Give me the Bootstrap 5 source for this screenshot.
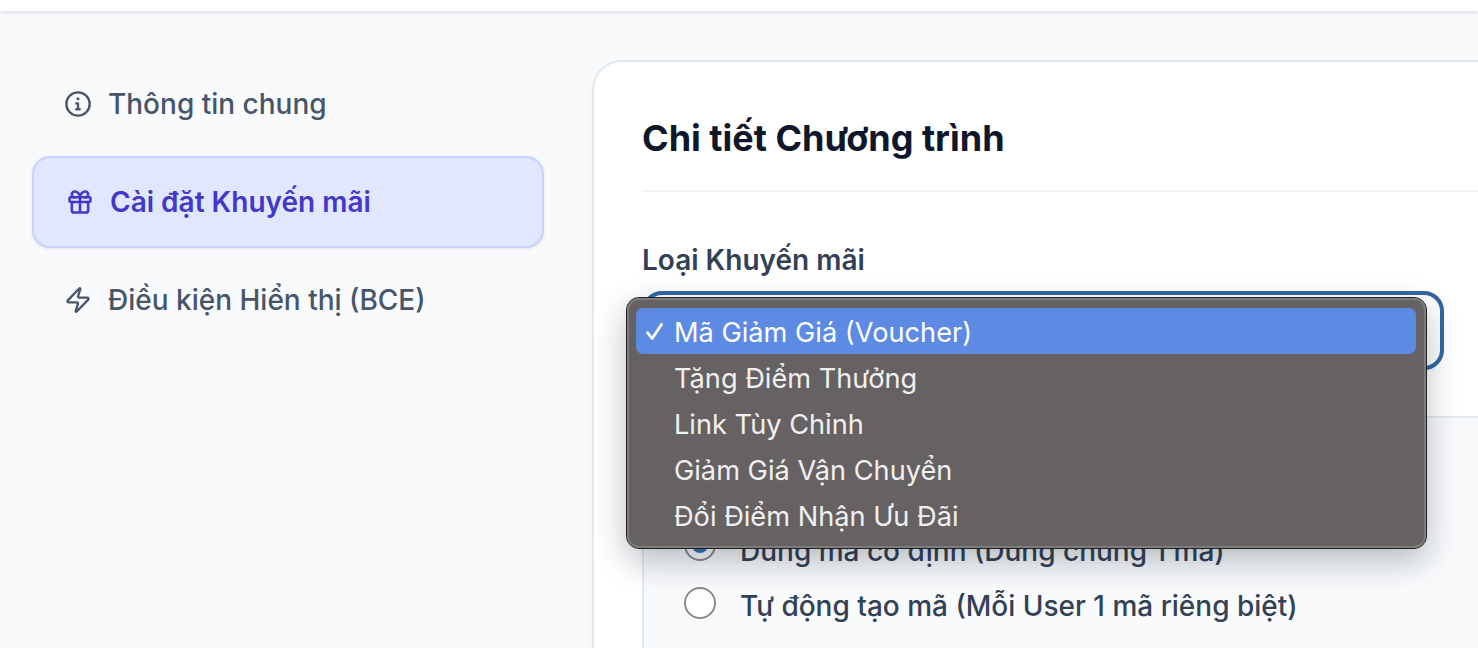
<!DOCTYPE html>
<html lang="vi">
<head>
<meta charset="utf-8">
<title>Chi tiết Chương trình</title>
<link href="https://cdn.jsdelivr.net/npm/bootstrap@5.3.0/dist/css/bootstrap.min.css" rel="stylesheet">
<style>
html,body{height:648px;overflow:hidden;}
body{background:#f8fafc;font-family:Inter,"Liberation Sans",sans-serif;color:#334155;}
.topbar{height:11px;background:#fff;box-shadow:0 1px 4px rgba(100,116,139,.28);position:relative;}
.pagewrap{width:1800px;padding:49px 0 0 32px;gap:48px;}
.sidenav{width:512px;flex:none;margin-top:-2px;}
.sidelink{height:92px;padding:0 30px;font-size:28px;font-weight:500;color:#475569;border:2px solid transparent;border-radius:18px;gap:16px;margin-bottom:6px;}
.sidelink svg{flex:none;width:28px;height:28px;fill:none;stroke:currentColor;stroke-width:2;stroke-linecap:round;stroke-linejoin:round;}
.sidelink.on{background:#e0e7ff;border-color:#c7d2fe;color:#4338ca;font-weight:600;box-shadow:0 1px 3px rgba(15,23,42,.1);gap:16px;padding:0 32px;}
.sidelink.on svg{stroke-width:2.2;}
.maincard{width:1100px;flex:none;height:800px;background:#fff;border:2px solid #e2e8f0;border-radius:30px 0 0 0;padding:48px;box-shadow:0 1px 3px rgba(15,23,42,.05);}
.cardhead{font-size:36px;font-weight:700;color:#0f172a;line-height:56px;padding-bottom:24px;border-bottom:2px solid #f1f5f9;margin-bottom:48px;}
.fieldlabel{font-size:28px;font-weight:600;color:#334155;line-height:40px;margin-bottom:11px;}
.selectwrap{position:relative;width:802px;}
.fakeselect{height:79px;border:4px solid #3068a5;border-radius:20px;background:#fff;}
.osmenu{position:absolute;left:-16px;top:6px;width:801px;height:252px;z-index:5;padding:10px 10px 9px 9px;background:#666263;border:1px solid #222;outline:2px solid #7f7c7c;outline-offset:-3px;border-radius:13px;box-shadow:0 12px 32px rgba(15,23,42,.28);font-size:27.2px;color:#f1f0f0;}
.osrow{height:46px;padding:4px 0 0 38px;position:relative;border-radius:7px;white-space:nowrap;flex:none;}
.osrow.sel{background:#5d8ae3;color:#fff;}
.oscheck{position:absolute;left:8px;top:50%;margin-top:-10px;width:21px;height:21px;fill:none;stroke:#fff;stroke-width:2.4;stroke-linecap:round;stroke-linejoin:round;}
.subbox{margin-top:46px;height:400px;background:#f8fafc;border:2px solid #e2e8f0;border-radius:0;padding:104px 40px 0;width:1000px;}
.radioline{height:55px;gap:24px;font-size:28px;font-weight:500;color:#334155;white-space:nowrap;}
.radioline>span:last-child{padding-top:2px;}
.radiomark{width:32px;height:32px;flex:none;border-radius:50%;border:2px solid #8b8b8f;background:#fff;margin-bottom:3px;}
.radiomark.checked{border-color:#8b8b8f;padding:6px;margin-bottom:9px;}
.radiomark.checked i{display:block;width:16px;height:16px;border-radius:50%;background:#3a74b8;}
</style>
</head>
<body>
<div class="topbar"></div>
<div class="pagewrap d-flex align-items-start">
  <nav class="sidenav d-flex flex-column">
    <a class="sidelink d-flex align-items-center text-decoration-none">
      <svg viewBox="0 0 24 24"><circle cx="12" cy="12" r="10"/><path d="M12 11.5v5M10.5 11.5H12M10.5 16.5h3"/><path d="M12 7.5h.01" stroke-width="2.6"/></svg>
      <span>Thông tin chung</span>
    </a>
    <a class="sidelink on d-flex align-items-center text-decoration-none">
      <svg viewBox="0 0 24 24"><rect x="3" y="8" width="18" height="4" rx="1"/><path d="M12 8v13M19 12v7a2 2 0 0 1-2 2H7a2 2 0 0 1-2-2v-7"/><path d="M7.5 8a2.5 2.5 0 0 1 0-5C9.5 3 12 5 12 8c0-3 2.5-5 4.5-5a2.5 2.5 0 0 1 0 5"/></svg>
      <span>Cài đặt Khuyến mãi</span>
    </a>
    <a class="sidelink d-flex align-items-center text-decoration-none">
      <svg viewBox="0 0 24 24"><path d="M4 14a1 1 0 0 1-.78-1.63l9.9-10.2a.5.5 0 0 1 .86.46l-1.92 6.02A1 1 0 0 0 13 10h7a1 1 0 0 1 .78 1.63l-9.9 10.2a.5.5 0 0 1-.86-.46l1.92-6.02A1 1 0 0 0 11 14z"/></svg>
      <span>Điều kiện Hiển thị (BCE)</span>
    </a>
  </nav>
  <main class="maincard">
    <div class="cardhead">Chi tiết Chương trình</div>
    <div class="fieldlabel">Loại Khuyến mãi</div>
    <div class="selectwrap">
      <div class="fakeselect"></div>
      <div class="osmenu d-flex flex-column">
        <div class="osrow sel d-flex align-items-center"><svg class="oscheck" viewBox="0 0 18 18"><path d="M3 10l4 5 8-12"/></svg>Mã Giảm Giá (Voucher)</div>
        <div class="osrow d-flex align-items-center">Tặng Điểm Thưởng</div>
        <div class="osrow d-flex align-items-center">Link Tùy Chỉnh</div>
        <div class="osrow d-flex align-items-center">Giảm Giá Vận Chuyển</div>
        <div class="osrow d-flex align-items-center">Đổi Điểm Nhận Ưu Đãi</div>
      </div>
    </div>
    <div class="subbox">
      <div class="radioline d-flex align-items-center"><span class="radiomark checked"><i></i></span><span>Dùng mã cố định (Dùng chung 1 mã)</span></div>
      <div class="radioline d-flex align-items-center"><span class="radiomark"></span><span>Tự động tạo mã (Mỗi User 1 mã riêng biệt)</span></div>
    </div>
  </main>
</div>
<script src="https://cdn.jsdelivr.net/npm/bootstrap@5.3.0/dist/js/bootstrap.bundle.min.js"></script>
</body>
</html>
